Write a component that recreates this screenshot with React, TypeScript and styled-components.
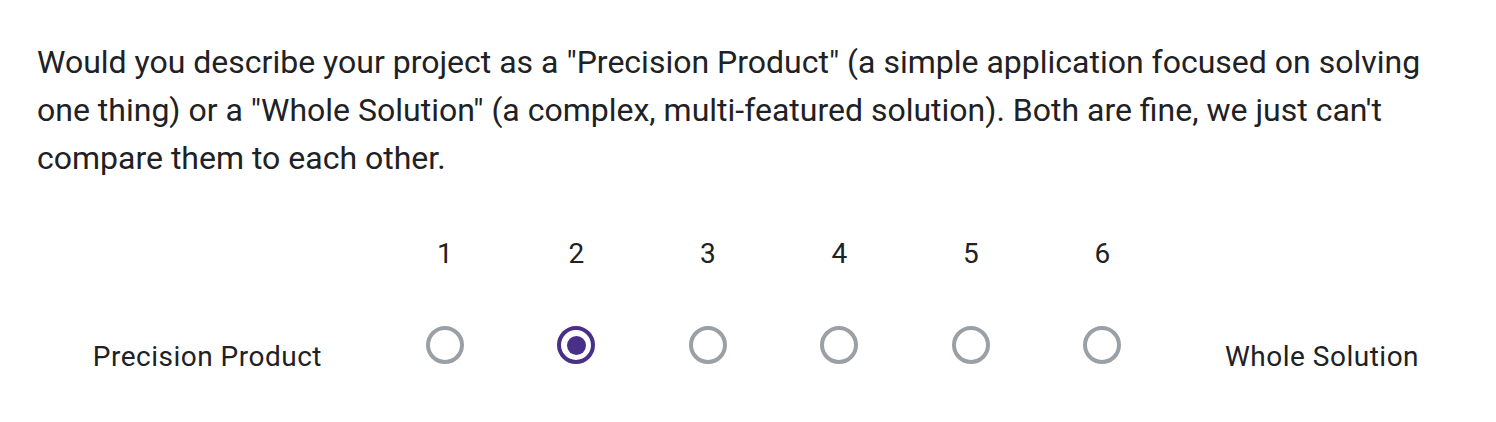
import React from "react";
import styled, { createGlobalStyle } from "styled-components";

const Global = createGlobalStyle`
  html, body { margin: 0; padding: 0; background: #ffffff; }
  body { font-family: Roboto, "Noto Sans", Arial, sans-serif; color: #202124; }
`;

const Card = styled.div`
  padding: 38px 0 0 37px;
  width: 1496px;
  box-sizing: border-box;
`;

const Title = styled.div`
  width: 1410px;
  font-size: 32px;
  line-height: 48px;
  color: #202124;
  letter-spacing: 0;
`;

const Scale = styled.div`
  display: grid;
  grid-template-columns: 342px repeat(6, 131.5px) auto;
  margin-top: 52px;
`;

const NumberCell = styled.div`
  height: 40px;
  line-height: 40px;
  font-size: 28px;
  text-align: center;
  color: #202124;
  margin-bottom: 47px;
`;

const Spacer = styled.div``;

const RadioCell = styled.div`
  height: 48px;
  display: flex;
  align-items: center;
  justify-content: center;
`;

const EndLabel = styled.div<{ $align: "left" | "right" }>`
  font-size: 28px;
  line-height: 40px;
  letter-spacing: 0.5px;
  padding-top: 16px;
  color: #202124;
  text-align: ${(p) => p.$align};
  ${(p) => (p.$align === "right" ? "padding-right: 57px;" : "padding-left: 57px;")}
  white-space: nowrap;
`;

const Radio = styled.div<{ $checked?: boolean }>`
  width: 38px;
  height: 38px;
  box-sizing: border-box;
  border-radius: 50%;
  border: 4px solid ${(p) => (p.$checked ? "#482f87" : "#9aa0a6")};
  display: flex;
  align-items: center;
  justify-content: center;
`;

const Dot = styled.div`
  width: 19px;
  height: 19px;
  border-radius: 50%;
  background: #482f87;
`;

export default function App() {
  const values = [1, 2, 3, 4, 5, 6];
  const selected = 2;
  return (
    <>
      <Global />
      <Card>
        <Title>
          Would you describe your project as a "Precision Product" (a simple application focused on solving one
          thing) or a "Whole Solution" (a complex, multi-featured solution). Both are fine, we just can't compare
          them to each other.
        </Title>
        <Scale>
          <Spacer />
          {values.map((v) => (
            <NumberCell key={`n${v}`}>{v}</NumberCell>
          ))}
          <Spacer />
          <EndLabel $align="right">Precision Product</EndLabel>
          {values.map((v) => (
            <RadioCell key={`r${v}`}>
              <Radio $checked={v === selected}>{v === selected && <Dot />}</Radio>
            </RadioCell>
          ))}
          <EndLabel $align="left">Whole Solution</EndLabel>
        </Scale>
      </Card>
    </>
  );
}
